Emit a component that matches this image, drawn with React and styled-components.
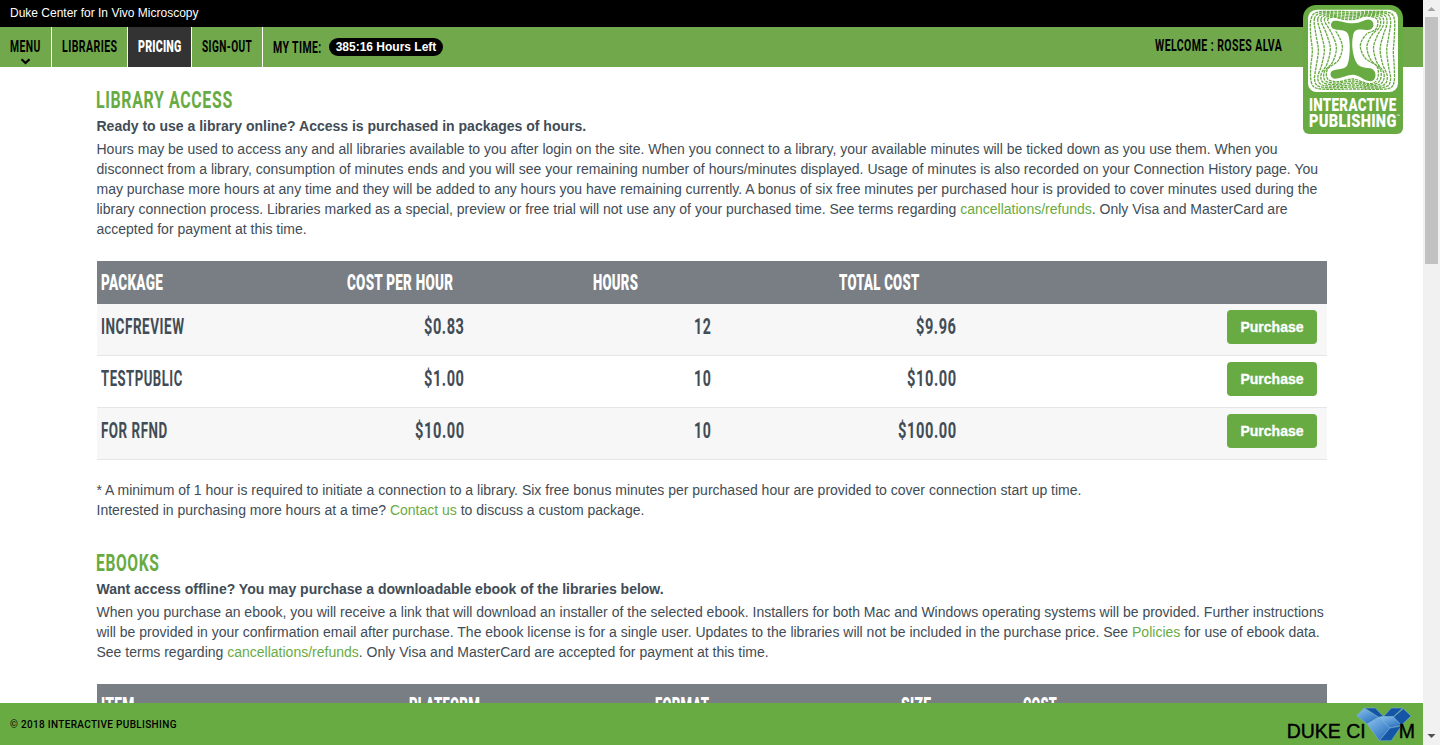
import React, { useLayoutEffect, useRef, useState } from "react";
import styled, { createGlobalStyle } from "styled-components";

const GlobalStyle = createGlobalStyle`
  * { box-sizing: border-box; }
  html, body { margin: 0; padding: 0; overflow: hidden; }
  body {
    font-family: "Liberation Sans", Arial, sans-serif;
    font-size: 14px;
    line-height: 20px;
    color: #414c56;
    background: #fff;
  }
`;

/* ---------- condensed display lettering ---------- */

const CondensedBox = styled.span`
  display: inline-block;
  flex: none;
  width: ${(p) => p.$width}px;
  height: ${(p) => p.$line}px;
  line-height: ${(p) => p.$line}px;
  font-family: Roboto, "Liberation Sans", sans-serif;
  font-size: ${(p) => p.$size}px;
  font-weight: ${(p) => (p.$heavy ? 900 : 700)};
  letter-spacing: ${(p) => (p.$heavy ? 0.02 : 0.04)}em;
  white-space: nowrap;
  text-transform: uppercase;
  vertical-align: top;
`;

const CondensedInk = styled.span`
  display: inline-block;
  transform-origin: 0 50%;
`;

function Condensed({ width, size, line = size, heavy, children }) {
  const ref = useRef(null);
  const [scale, setScale] = useState(0.6);
  useLayoutEffect(() => {
    const spacing = size * (heavy ? 0.02 : 0.04);
    setScale(width / (ref.current.offsetWidth - spacing));
  }, [width, size, heavy, children]);
  return (
    <CondensedBox $width={width} $size={size} $line={line} $heavy={heavy}>
      <CondensedInk ref={ref} style={{ transform: `scaleX(${scale})` }}>
        {children}
      </CondensedInk>
    </CondensedBox>
  );
}

/* ---------- page frame ---------- */

const Frame = styled.div`
  display: flex;
  width: 1440px;
  height: 745px;
  overflow: hidden;
`;

const Page = styled.div`
  position: relative;
  display: flex;
  flex-direction: column;
  width: 1423px;
  height: 745px;
`;

const TopBar = styled.div`
  flex: none;
  height: 27px;
  padding: 3px 10px;
  background: #000;
  color: #fff;
  font-size: 12px;
`;

const NavBar = styled.nav`
  display: flex;
  flex: none;
  height: 40px;
  background: #70a84b;
  color: #000;
`;

const NavItem = styled.div`
  position: relative;
  width: ${(p) => p.$width}px;
  padding: 12px 0 0 9.5px;
  border-right: 1px solid #fff;
  background: ${(p) => (p.$active ? "#333" : "transparent")};
  color: ${(p) => (p.$active ? "#fff" : "#000")};
`;

const MenuCaret = styled.svg`
  position: absolute;
  left: 20px;
  bottom: 2px;
  width: 11px;
  height: 7px;
`;

const MyTime = styled.div`
  display: flex;
  gap: 8px;
  padding: 13px 0 0 10px;
`;

const TimeBadge = styled.span`
  width: 114px;
  height: 18px;
  margin-top: -2px;
  border-radius: 9px;
  background: #000;
  color: #fff;
  font-size: 12px;
  font-weight: bold;
  line-height: 18px;
  text-align: center;
  white-space: nowrap;
`;

const Welcome = styled.div`
  margin: 11px 141.5px 0 auto;
`;

const LogoBadge = styled.div`
  position: absolute;
  top: 5px;
  right: 20px;
  width: 100px;
  height: 129px;
  border-radius: 13px 13px 6px 6px;
  background: #69ab43;
  color: #fff;
`;

const LogoArt = styled.svg`
  display: block;
  width: 100px;
  height: 90px;
  margin-bottom: 2px;
`;

const LogoLine = styled.div`
  display: flex;
  height: 16px;
  padding-left: 6px;
`;

const Trademark = styled.span`
  font-size: 4px;
  line-height: 6px;
`;

/* ---------- content ---------- */

const Content = styled.main`
  flex: 1;
  min-height: 0;
  overflow: hidden;
  padding: 21px 96px 0 96.5px;
`;

const Heading = styled.h2`
  margin: 0 0 0 -0.5px;
  height: 28px;
  color: #69ab43;
  font-weight: normal;
`;

const Lead = styled.p`
  margin: 0 0 3px;
  font-weight: bold;
`;

const Text = styled.p`
  margin: 0;
  white-space: nowrap;
`;

const Link = styled.a`
  color: #69ab43;
`;

const Table = styled.div`
  width: 1230px;
  margin: 22px 0 20px 0.5px;
`;

const HeadRow = styled.div`
  display: grid;
  grid-template-columns: ${(p) => p.$columns};
  height: 43px;
  padding-top: 11px;
  background: #787e84;
  color: #fff;
`;

const BodyRow = styled.div`
  display: grid;
  grid-template-columns: ${(p) => p.$columns};
  height: 52px;
  border-bottom: 1px solid #e6e6e6;
  background: ${(p) => (p.$shaded ? "#f7f7f7" : "#fff")};
`;

const Cell = styled.div`
  padding: ${(p) => (p.$body ? "12px" : "0")} 4px 0;
`;

const NumberCell = styled.div`
  width: 123px;
  padding: 12px 2px 0 0;
  text-align: right;

  & > span {
    text-align: left;
  }
`;

const ActionCell = styled.div`
  display: flex;
  justify-content: flex-end;
  padding: 6px 10px 0 0;
`;

const PurchaseButton = styled.button`
  width: 90px;
  height: 34px;
  padding: 0;
  border: 0;
  border-radius: 4px;
  background: #69ab43;
  color: #fff;
  font: bold 14px/34px "Liberation Sans", Arial, sans-serif;
  -webkit-text-stroke: 0.3px #fff;
`;

const SectionGap = styled.div`
  height: 31px;
`;

const Footer = styled.footer`
  display: flex;
  flex: none;
  justify-content: space-between;
  height: 42px;
  padding-left: 10px;
  background: #69ab43;
  color: #000;
`;

const Copyright = styled.span`
  padding-top: 12px;
  font-size: 10px;
  font-weight: 500;
  line-height: 20px;
  letter-spacing: 0.33px;
  font-family: Roboto, "Liberation Sans", sans-serif;
`;

const DukeMark = styled.div`
  display: flex;
  padding: 18px 8px 0 0;
  font-size: 19.5px;
  line-height: 20px;
`;

const DukeCubes = styled.svg`
  width: 56px;
  height: 36px;
  margin: -15px -13px 0 -10px;
`;

const DukeLetters = styled.span`
  position: relative;
  -webkit-text-stroke: 0.4px #000;
`;

/* ---------- scrollbar ---------- */

const Scrollbar = styled.div`
  display: flex;
  flex-direction: column;
  align-items: center;
  width: 17px;
  height: 745px;
  background: #f1f1f1;
`;

const ScrollArrow = styled.svg`
  width: 17px;
  height: 17px;
`;

const ScrollThumb = styled.div`
  width: 13px;
  height: 247px;
  margin-bottom: auto;
  background: #c1c1c1;
`;

/* ---------- logo contours ---------- */

const OUTER = [
  [24, 42], [42, 22], [96, 19], [151, 21], [206, 19], [257, 22], [274, 42], [274, 95], [271, 140],
  [274, 190], [273, 232], [258, 250], [206, 253], [151, 252], [96, 253], [42, 250], [25, 232],
  [23, 188], [28, 138], [23, 90],
];
const INNER = [
  [74, 46], [92, 36], [122, 43], [154, 43], [188, 33], [222, 42], [219, 72], [190, 88], [172, 122],
  [187, 160], [222, 184], [223, 222], [198, 236], [150, 222], [106, 230], [74, 222], [74, 192],
  [106, 166], [118, 125], [102, 84],
];

function closedCurve(points) {
  const n = points.length;
  const at = (i) => points[(i + n) % n];
  let d = `M${at(0)[0]} ${at(0)[1]}`;
  for (let i = 0; i < n; i += 1) {
    const [a, b, c, e] = [at(i - 1), at(i), at(i + 1), at(i + 2)];
    d += `C${b[0] + (c[0] - a[0]) / 6} ${b[1] + (c[1] - a[1]) / 6} ${c[0] - (e[0] - b[0]) / 6} ${
      c[1] - (e[1] - b[1]) / 6
    } ${c[0]} ${c[1]}`;
  }
  return `${d}Z`;
}

const STEPS = 5;
const CONTOURS = Array.from({ length: STEPS + 1 }, (_, step) =>
  closedCurve(
    OUTER.map(([x, y], i) => [
      x + ((INNER[i][0] - x) * step) / STEPS,
      y + ((INNER[i][1] - y) * step) / STEPS,
    ])
  )
);

function PublishingLogo() {
  return (
    <LogoBadge>
      <LogoArt viewBox="0 0 300 270">
        <rect x="15" y="14" width="270" height="247" rx="26" fill="#fff" />
        <g fill="none" stroke="#69ab43" strokeWidth="4" strokeDasharray="9 2.5">
          {CONTOURS.map((d) => (
            <path key={d} d={d} />
          ))}
        </g>
        <path
          fill="#69ab43"
          stroke="#fff"
          strokeWidth="10"
          paintOrder="stroke"
          d="M95 47C82 48 80 66 92 72C108 78 124 72 133 84C143 96 143 163 132 182C122 196 95 190 86 199C78 208 84 222 98 221C122 219 136 207 156 210C174 214 186 229 202 229C219 228 222 204 211 194C201 186 174 192 163 177C148 155 144 116 151 88C157 66 176 75 195 75C216 74 216 47 200 44C184 42 176 55 150 55C125 55 112 46 95 47Z"
        />
      </LogoArt>
      <LogoLine>
        <Condensed width={87} size={18} line={16} heavy>Interactive</Condensed>
      </LogoLine>
      <LogoLine>
        <Condensed width={87} size={18} line={16} heavy>Publishing</Condensed>
        <Trademark>™</Trademark>
      </LogoLine>
    </LogoBadge>
  );
}

function CivmCubes() {
  return (
    <DukeCubes viewBox="0 0 168 108">
      <defs>
        <linearGradient id="cubeFace" x1="0" y1="0" x2="0.7" y2="1">
          <stop offset="0" stopColor="#8cc4ee" />
          <stop offset="1" stopColor="#2a70c0" />
        </linearGradient>
      </defs>
      <g stroke="#7fb4de" strokeWidth="1.6" strokeLinejoin="round">
        <path fill="url(#cubeFace)" d="M24 7L68 34L34 54L2 29Z" />
        <path fill="#1555a5" d="M26 6L58 6L82 31L68 34Z" />
        <path fill="#1555a5" d="M106 6L140 6L112 32L82 32Z" />
        <path fill="#1555a5" d="M142 8L165 30L136 58L112 34Z" />
        <path fill="url(#cubeFace)" d="M82 32L112 32L136 58L102 66L68 34Z" />
        <path fill="url(#cubeFace)" d="M68 34L102 66L70 104L34 54Z" />
        <path fill="#1555a5" d="M102 66L136 60L106 104L70 104Z" />
      </g>
    </DukeCubes>
  );
}

/* ---------- data ---------- */

const PACKAGE_COLUMNS = "246px 246px 246px 246px 246px";
const PACKAGE_HEADS = [
  ["Package", 62],
  ["Cost per hour", 106],
  ["Hours", 45],
  ["Total cost", 80],
];
const PACKAGES = [
  { name: ["INCFReview", 83], values: [["$0.83", 40], ["12", 16.5], ["$9.96", 40]] },
  { name: ["TestPublic", 81], values: [["$1.00", 40], ["10", 16.5], ["$10.00", 49]] },
  { name: ["For RFND", 66], values: [["$10.00", 49], ["10", 16.5], ["$100.00", 58]] },
];
const EBOOK_COLUMNS = "308px 246px 246px 122px 308px";
const EBOOK_HEADS = [
  ["Item", 33],
  ["Platform", 71],
  ["Format", 54],
  ["Size", 30],
  ["Cost", 34],
];

export default function App() {
  return (
    <Frame>
      <GlobalStyle />
      <Page>
        <TopBar>Duke Center for In Vivo Microscopy</TopBar>
        <NavBar>
          <NavItem $width={52}>
            <Condensed width={30} size={16}>Menu</Condensed>
            <MenuCaret viewBox="0 0 11 7">
              <path d="M1.5 1.3L5.5 5L9.5 1.3" fill="none" stroke="#000" strokeWidth="2.2" />
            </MenuCaret>
          </NavItem>
          <NavItem $width={76}>
            <Condensed width={55} size={16}>Libraries</Condensed>
          </NavItem>
          <NavItem $width={64} $active>
            <Condensed width={43} size={16} heavy>Pricing</Condensed>
          </NavItem>
          <NavItem $width={71}>
            <Condensed width={50} size={16}>Sign-out</Condensed>
          </NavItem>
          <MyTime>
            <Condensed width={48} size={16}>My time:</Condensed>
            <TimeBadge>385:16 Hours Left</TimeBadge>
          </MyTime>
          <Welcome>
            <Condensed width={126.5} size={16}>Welcome : Roses Alva</Condensed>
          </Welcome>
        </NavBar>
        <Content>
          <Heading>
            <Condensed width={136} size={24}>Library access</Condensed>
          </Heading>
          <Lead>Ready to use a library online? Access is purchased in packages of hours.</Lead>
          <Text>
            Hours may be used to access any and all libraries available to you after login on the site. When you
            connect to a library, your available minutes will be ticked down as you use them. When you
            <br />
            disconnect from a library, consumption of minutes ends and you will see your remaining number of
            hours/minutes displayed. Usage of minutes is also recorded on your Connection History page. You
            <br />
            may purchase more hours at any time and they will be added to any hours you have remaining currently. A
            bonus of six free minutes per purchased hour is provided to cover minutes used during the
            <br />
            library connection process. Libraries marked as a special, preview or free trial will not use any of your
            purchased time. See terms regarding <Link>cancellations/refunds</Link>. Only Visa and MasterCard are
            <br />
            accepted for payment at this time.
          </Text>
          <Table>
            <HeadRow $columns={PACKAGE_COLUMNS}>
              {PACKAGE_HEADS.map(([label, width]) => (
                <Cell key={label}>
                  <Condensed width={width} size={21.5} heavy>{label}</Condensed>
                </Cell>
              ))}
            </HeadRow>
            {PACKAGES.map(({ name, values }, index) => (
              <BodyRow key={name[0]} $columns={PACKAGE_COLUMNS} $shaded={index % 2 === 0}>
                <Cell $body>
                  <Condensed width={name[1]} size={21.5}>{name[0]}</Condensed>
                </Cell>
                {values.map(([value, width], column) => (
                  <NumberCell key={column}>
                    <Condensed width={width} size={21.5}>{value}</Condensed>
                  </NumberCell>
                ))}
                <ActionCell>
                  <PurchaseButton>Purchase</PurchaseButton>
                </ActionCell>
              </BodyRow>
            ))}
          </Table>
          <Text>
            * A minimum of 1 hour is required to initiate a connection to a library. Six free bonus minutes per
            purchased hour are provided to cover connection start up time.
            <br />
            Interested in purchasing more hours at a time? <Link>Contact us</Link> to discuss a custom package.
          </Text>
          <SectionGap />
          <Heading>
            <Condensed width={63} size={24}>eBooks</Condensed>
          </Heading>
          <Lead>Want access offline? You may purchase a downloadable ebook of the libraries below.</Lead>
          <Text>
            When you purchase an ebook, you will receive a link that will download an installer of the selected ebook.
            Installers for both Mac and Windows operating systems will be provided. Further instructions
            <br />
            will be provided in your confirmation email after purchase. The ebook license is for a single user. Updates
            to the libraries will not be included in the purchase price. See <Link>Policies</Link> for use of ebook
            data.
            <br />
            See terms regarding <Link>cancellations/refunds</Link>. Only Visa and MasterCard are accepted for payment
            at this time.
          </Text>
          <Table>
            <HeadRow $columns={EBOOK_COLUMNS}>
              {EBOOK_HEADS.map(([label, width]) => (
                <Cell key={label}>
                  <Condensed width={width} size={21.5} heavy>{label}</Condensed>
                </Cell>
              ))}
            </HeadRow>
          </Table>
        </Content>
        <Footer>
          <Copyright>© 2018 INTERACTIVE PUBLISHING</Copyright>
          <DukeMark>
            <DukeLetters>DUKE CI</DukeLetters>
            <CivmCubes />
            <DukeLetters>M</DukeLetters>
          </DukeMark>
        </Footer>
        <PublishingLogo />
      </Page>
      <Scrollbar>
        <ScrollArrow viewBox="0 0 17 17">
          <path d="M8.5 7L12.5 11H4.5Z" fill="#a3a3a3" />
        </ScrollArrow>
        <ScrollThumb />
        <ScrollArrow viewBox="0 0 17 17">
          <path d="M4.5 6H12.5L8.5 10Z" fill="#505050" />
        </ScrollArrow>
      </Scrollbar>
    </Frame>
  );
}
